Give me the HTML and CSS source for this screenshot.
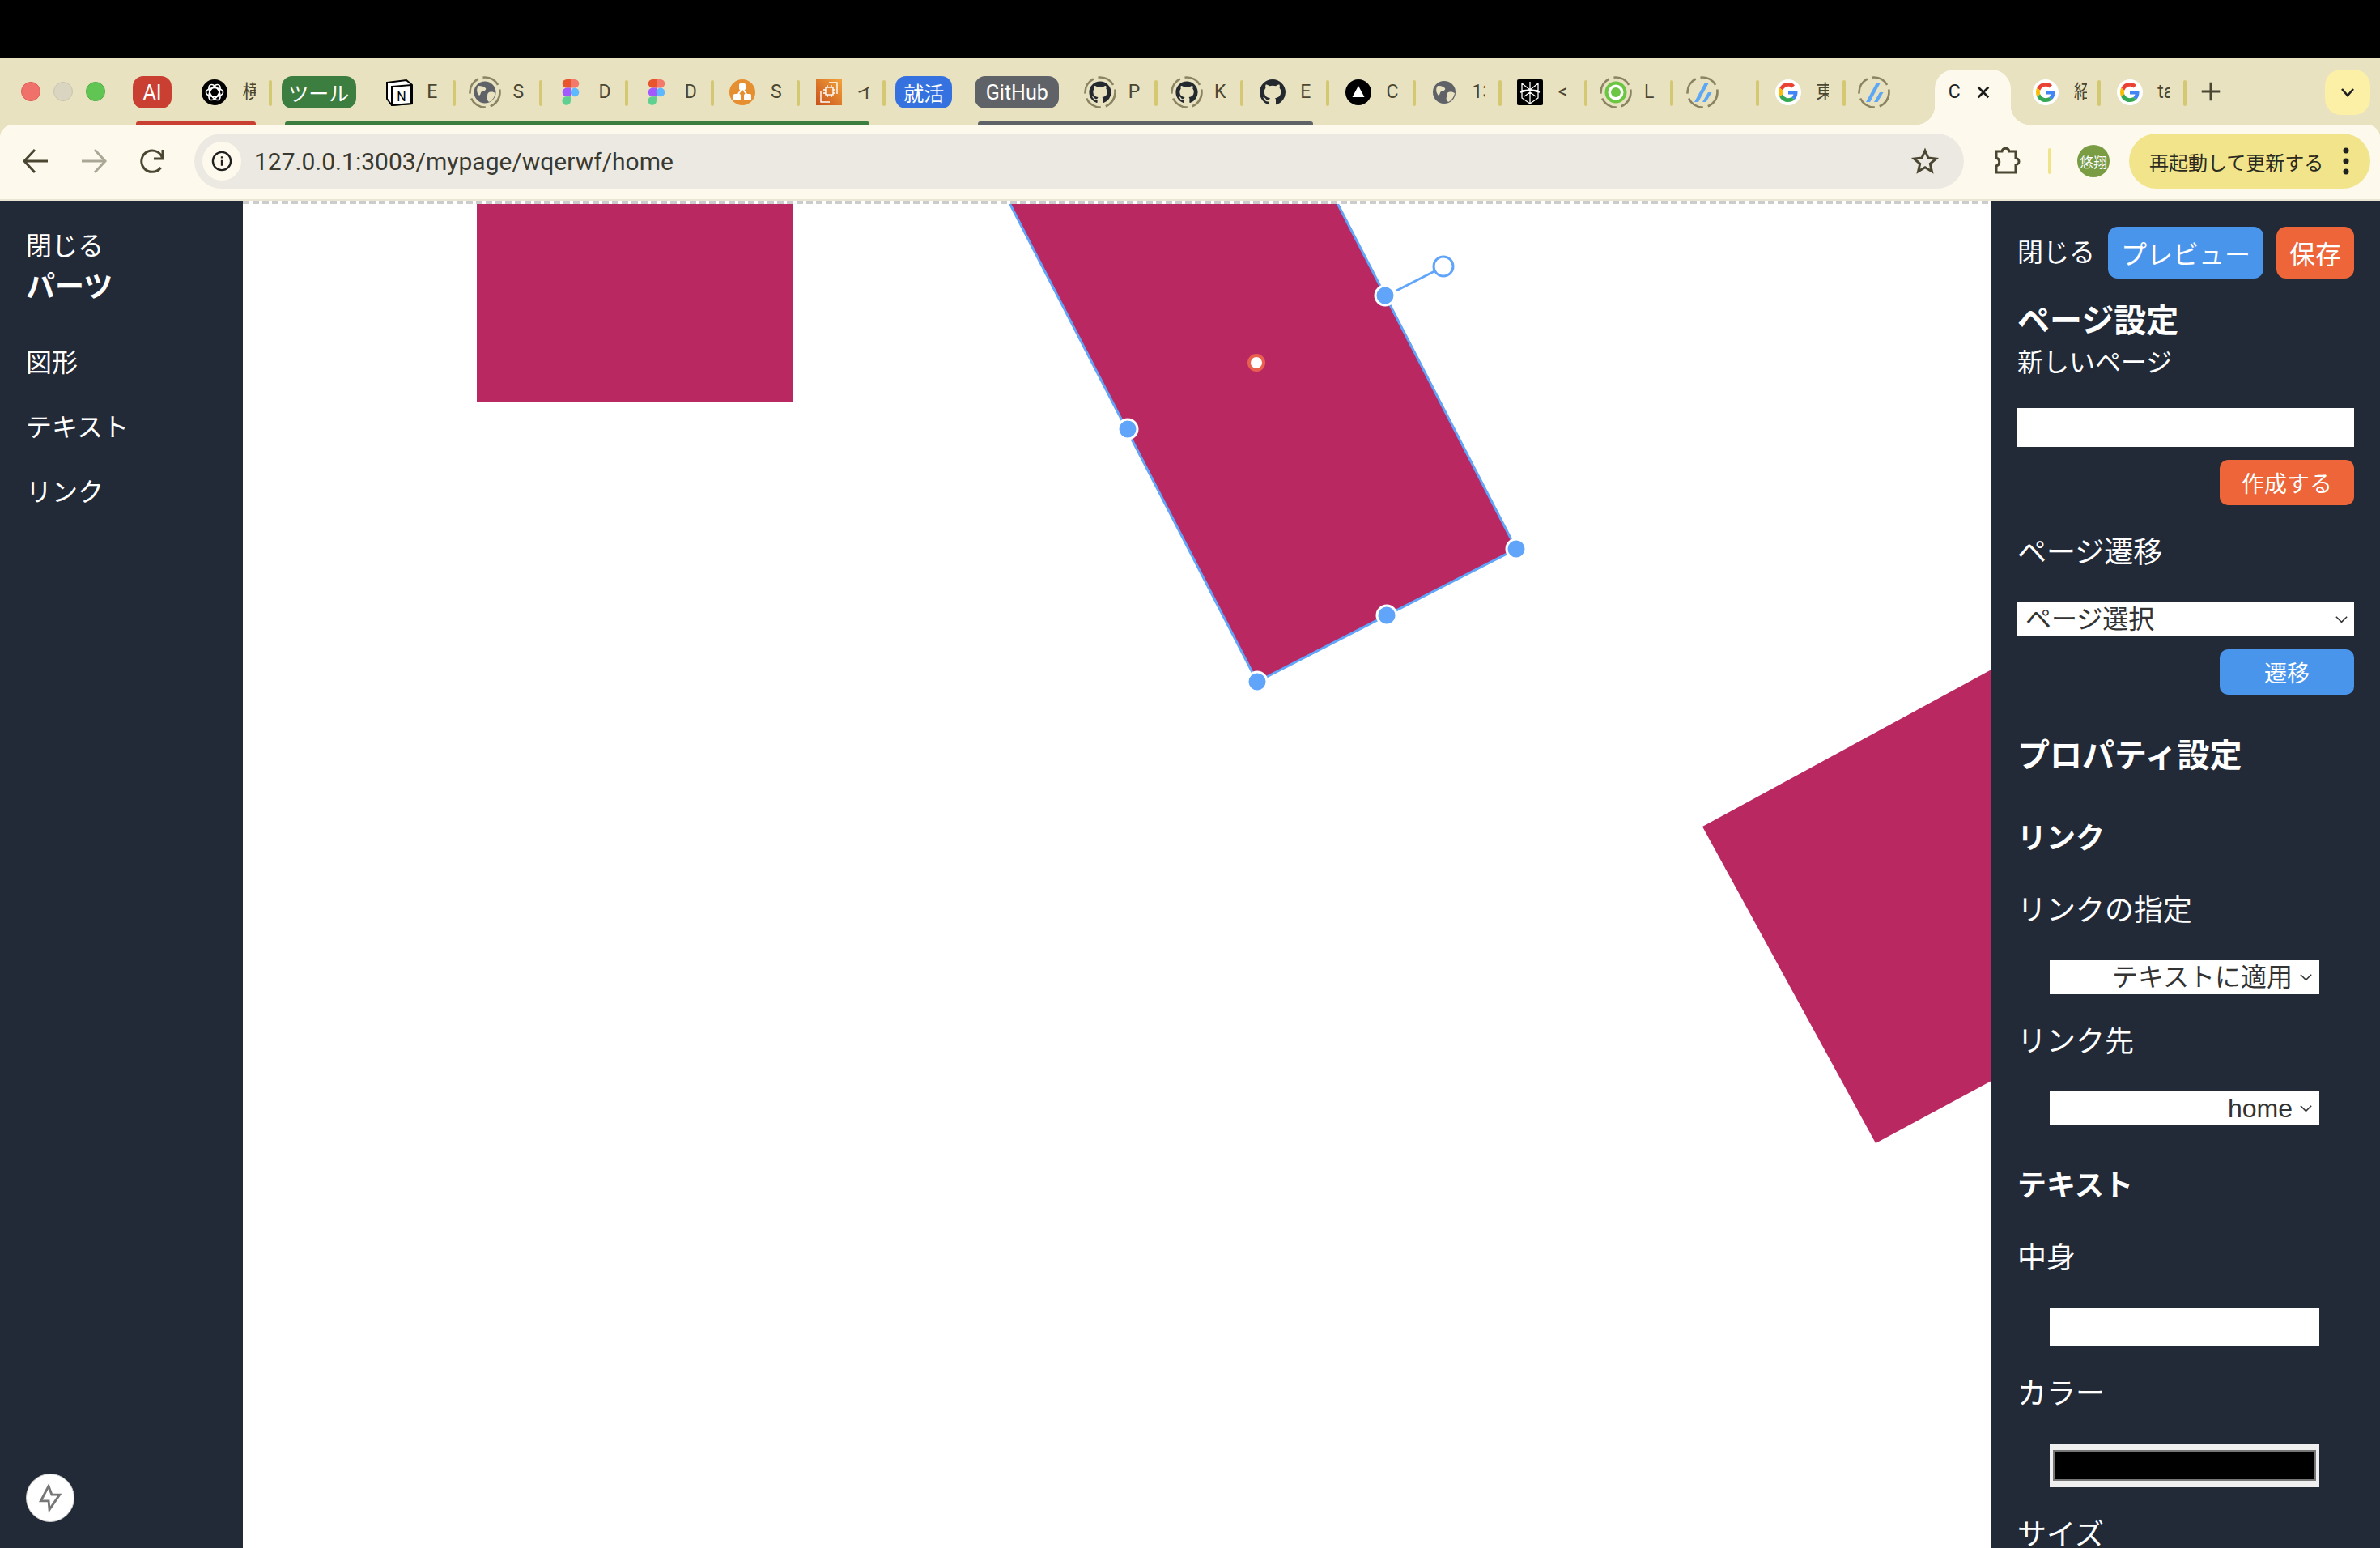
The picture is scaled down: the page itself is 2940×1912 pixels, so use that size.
FILE: index.html
```html
<!DOCTYPE html>
<html lang="ja">
<head>
    <meta charset="UTF-8">
    <title>mypage - wqerwf</title>
    <link rel="stylesheet" href="styles.css">
</head>
<body>
    <!-- shared icons -->
    <svg class="icon-defs" width="0" height="0">
        <defs>
            <linearGradient id="aws-grad" x1="0" y1="1" x2="1" y2="0">
                <stop offset="0" stop-color="#c8511b"/>
                <stop offset="1" stop-color="#f2a33a"/>
            </linearGradient>
        </defs>
        <symbol id="ring" viewBox="0 0 40 40">
            <circle cx="20" cy="20" r="18.5" fill="none" stroke="#8a8463" stroke-width="2.6" stroke-dasharray="22 6"/>
        </symbol>
        <symbol id="i-chatgpt" viewBox="0 0 40 40">
            <circle cx="20" cy="20" r="16" fill="#000"/>
            <g fill="none" stroke="#fff" stroke-width="1.6">
                <ellipse cx="20" cy="20" rx="10.5" ry="5.5"/>
                <ellipse cx="20" cy="20" rx="10.5" ry="5.5" transform="rotate(60 20 20)"/>
                <ellipse cx="20" cy="20" rx="10.5" ry="5.5" transform="rotate(120 20 20)"/>
            </g>
        </symbol>
        <symbol id="i-notion" viewBox="0 0 40 40">
            <path d="M5 8 29 5 36 11V34L11 36 5 28Z" fill="#fff" stroke="#000" stroke-width="2"/>
            <path d="M11 13 35 11V34L11 36Z" fill="#fff" stroke="#000" stroke-width="2"/>
            <text x="23" y="31" text-anchor="middle" class="notion-n">N</text>
        </symbol>
        <symbol id="i-globe" viewBox="0 0 40 40">
            <use href="#ring"/>
            <circle cx="20" cy="20" r="13.5" fill="#5f6368"/>
            <path d="M12 12c4 0 7 1 9 3 1 2-2 4-5 4-2 2-1 4-3 5-3-3-4-8-1-12ZM25 20c4-1 6 0 8 1-1 5-4 9-8 11-2-2-3-4-2-6 0-3 0-5 2-6Z" fill="#e8e2c0"/>
        </symbol>
        <symbol id="i-globe-plain" viewBox="0 0 40 40">
            <circle cx="20" cy="20" r="14" fill="#5f6368"/>
            <path d="M12 12c4 0 7 1 9 3 1 2-2 4-5 4-2 2-1 4-3 5-3-3-4-8-1-12ZM25 20c4-1 6 0 8 1-1 5-4 9-8 11-2-2-3-4-2-6 0-3 0-5 2-6Z" fill="#e8e2c0"/>
        </symbol>
        <symbol id="i-figma" viewBox="0 0 40 40">
            <path d="M20 4h-5a5.300 5.300 0 0 0 0 10.600h5Z" fill="#e8552d"/>
            <path d="M20 4h5a5.300 5.300 0 0 1 0 10.600h-5Z" fill="#f5796a"/>
            <path d="M20 14.600h-5a5.300 5.300 0 0 0 0 10.600h5Z" fill="#a259ff"/>
            <circle cx="25" cy="19.900" r="5.300" fill="#5cb8ff"/>
            <path d="M15 25.200h5v5.300a5.300 5.300 0 1 1-5-5.300Z" fill="#5fd08f"/>
        </symbol>
        <symbol id="i-tree" viewBox="0 0 40 40">
            <circle cx="20" cy="20" r="16" fill="#e68f31"/>
            <path d="M20 15 13 25M20 15 27 25" stroke="#fff" stroke-width="2"/>
            <rect x="16" y="9" width="8" height="8" rx="1.500" fill="#fff"/>
            <rect x="9" y="22" width="9" height="8" rx="1.500" fill="#fff"/>
            <rect x="22" y="22" width="9" height="8" rx="1.500" fill="#fff"/>
        </symbol>
        <symbol id="i-aws" viewBox="0 0 40 40">
            <rect x="4" y="4" width="32" height="32" fill="url(#aws-grad)"/>
            <g fill="none" stroke="#fff" stroke-width="1.400">
                <rect x="16" y="14" width="9" height="9"/>
                <path d="M18 11v3M23 11v3M18 23v3M23 23v3M13 17h3M13 21h3M25 17h3M25 21h3"/>
                <path d="M20 8h10v14M10 18v14h11"/>
            </g>
        </symbol>
        <symbol id="i-github" viewBox="0 0 40 40">
            <path transform="translate(4 4) scale(2)" fill="#24292f" d="M8 0C3.58 0 0 3.58 0 8c0 3.54 2.29 6.53 5.47 7.59.4.07.55-.17.55-.38 0-.19-.01-.82-.01-1.49-2.01.37-2.53-.49-2.69-.94-.09-.23-.48-.94-.82-1.13-.28-.15-.68-.52-.01-.53.63-.01 1.08.58 1.23.82.72 1.21 1.87.87 2.33.66.07-.52.28-.87.51-1.07-1.78-.2-3.64-.89-3.64-3.95 0-.87.31-1.59.82-2.15-.08-.2-.36-1.02.08-2.12 0 0 .67-.21 2.2.82.64-.18 1.32-.27 2-.27.68 0 1.36.09 2 .27 1.53-1.04 2.2-.82 2.2-.82.44 1.1.16 1.92.08 2.12.51.56.82 1.27.82 2.15 0 3.07-1.87 3.75-3.65 3.95.29.25.54.73.54 1.48 0 1.07-.01 1.93-.01 2.2 0 .21.15.46.55.38A8.013 8.013 0 0016 8c0-4.42-3.58-8-8-8z"/>
        </symbol>
        <symbol id="i-github-ring" viewBox="0 0 40 40">
            <use href="#ring"/>
            <path transform="translate(6.400 6.400) scale(1.700)" fill="#24292f" d="M8 0C3.58 0 0 3.58 0 8c0 3.54 2.29 6.53 5.47 7.59.4.07.55-.17.55-.38 0-.19-.01-.82-.01-1.49-2.01.37-2.53-.49-2.69-.94-.09-.23-.48-.94-.82-1.13-.28-.15-.68-.52-.01-.53.63-.01 1.08.58 1.23.82.72 1.21 1.87.87 2.33.66.07-.52.28-.87.51-1.07-1.78-.2-3.64-.89-3.64-3.95 0-.87.31-1.59.82-2.15-.08-.2-.36-1.02.08-2.12 0 0 .67-.21 2.2.82.64-.18 1.32-.27 2-.27.68 0 1.36.09 2 .27 1.53-1.04 2.2-.82 2.2-.82.44 1.1.16 1.92.08 2.12.51.56.82 1.27.82 2.15 0 3.07-1.87 3.75-3.65 3.95.29.25.54.73.54 1.48 0 1.07-.01 1.93-.01 2.2 0 .21.15.46.55.38A8.013 8.013 0 0016 8c0-4.42-3.58-8-8-8z"/>
        </symbol>
        <symbol id="i-triangle" viewBox="0 0 40 40">
            <circle cx="20" cy="20" r="16" fill="#000"/>
            <path d="M20 12 27.500 26H12.500Z" fill="#fff"/>
        </symbol>
        <symbol id="i-spark" viewBox="0 0 40 40">
            <rect x="4" y="4" width="32" height="32" rx="2" fill="#000"/>
            <path d="M20 7V34M10 9 20 17 30 9M10 9V18L20 17 30 18V9M8 20 20 17 32 20M10 18V27L20 34 30 27V18M13 25 20 20 27 25" fill="none" stroke="#fff" stroke-width="1.300"/>
        </symbol>
        <symbol id="i-green" viewBox="0 0 40 40">
            <use href="#ring"/>
            <circle cx="20" cy="20" r="11.500" fill="#fff" stroke="#6cc644" stroke-width="4"/>
            <circle cx="20" cy="20" r="6" fill="#6cc644"/>
        </symbol>
        <symbol id="i-slash" viewBox="0 0 40 40">
            <use href="#ring"/>
            <path d="M23 8H28L15 32H10ZM27 20H31.500L24.500 32H20Z" fill="#5ca8f5"/>
        </symbol>
        <symbol id="i-google" viewBox="0 0 40 40">
            <circle cx="20" cy="20" r="16" fill="#fff"/>
            <g transform="translate(8 8) scale(.5)">
                <path fill="#EA4335" d="M24 9.500c3.540 0 6.710 1.220 9.210 3.600l6.850-6.850C35.900 2.380 30.470 0 24 0 14.620 0 6.510 5.380 2.560 13.220l7.980 6.190C12.430 13.720 17.740 9.500 24 9.500z"/>
                <path fill="#4285F4" d="M46.980 24.550c0-1.570-.15-3.090-.38-4.550H24v9.020h12.940c-.58 2.960-2.260 5.480-4.780 7.180l7.730 6c4.510-4.180 7.090-10.360 7.090-17.650z"/>
                <path fill="#FBBC05" d="M10.530 28.590c-.48-1.450-.76-2.990-.76-4.590s.27-3.140.76-4.590l-7.980-6.190C.92 16.460 0 20.120 0 24c0 3.880.92 7.540 2.560 10.780l7.970-6.190z"/>
                <path fill="#34A853" d="M24 48c6.480 0 11.930-2.130 15.890-5.810l-7.730-6c-2.150 1.450-4.920 2.300-8.160 2.300-6.260 0-11.570-4.220-13.470-9.910l-7.980 6.190C6.510 42.620 14.620 48 24 48z"/>
            </g>
        </symbol>
    </svg>

    <header class="browser">
        <div class="tabstrip">
            <div class="lights">
                <span class="light light-red"></span>
                <span class="light light-off"></span>
                <span class="light light-green"></span>
            </div>

            <div class="tab-group group-red group-first">
                <span class="chip chip-red">AI</span>
                <div class="tab tab-after-chip"><svg class="ico"><use href="#i-chatgpt"/></svg><span class="tab-label">横</span></div>
            </div>

            <div class="tab-group group-green">
                <span class="chip chip-green">ツール</span>
                <div class="tab tab-after-chip"><svg class="ico"><use href="#i-notion"/></svg><span class="tab-label">E</span></div>
                <div class="tab"><svg class="ico"><use href="#i-globe"/></svg><span class="tab-label">S</span></div>
                <div class="tab"><svg class="ico"><use href="#i-figma"/></svg><span class="tab-label">D</span></div>
                <div class="tab"><svg class="ico"><use href="#i-figma"/></svg><span class="tab-label">D</span></div>
                <div class="tab"><svg class="ico"><use href="#i-tree"/></svg><span class="tab-label">S</span></div>
                <div class="tab"><svg class="ico"><use href="#i-aws"/></svg><span class="tab-label">イ</span></div>
            </div>

            <div class="tab-group tab-group-solo">
                <span class="chip chip-blue">就活</span>
            </div>

            <div class="tab-group group-grey tab-group-github">
                <span class="chip chip-grey">GitHub</span>
                <div class="tab tab-after-github"><svg class="ico"><use href="#i-github-ring"/></svg><span class="tab-label">P</span></div>
                <div class="tab"><svg class="ico"><use href="#i-github-ring"/></svg><span class="tab-label">K</span></div>
                <div class="tab"><svg class="ico"><use href="#i-github"/></svg><span class="tab-label">E</span></div>
            </div>

            <div class="tab"><svg class="ico"><use href="#i-triangle"/></svg><span class="tab-label">C</span></div>
            <div class="tab"><svg class="ico"><use href="#i-globe-plain"/></svg><span class="tab-label">13</span></div>
            <div class="tab"><svg class="ico"><use href="#i-spark"/></svg><span class="tab-label">&lt;</span></div>
            <div class="tab"><svg class="ico"><use href="#i-green"/></svg><span class="tab-label">L</span></div>
            <div class="tab"><svg class="ico"><use href="#i-slash"/></svg><span class="tab-label"></span></div>
            <div class="tab"><svg class="ico"><use href="#i-google"/></svg><span class="tab-label">東</span></div>
            <div class="tab tab-plain"><svg class="ico"><use href="#i-slash"/></svg><span class="tab-label"></span></div>

            <div class="tab-active">
                <span class="tab-label tab-label-active">C</span>
                <svg class="tab-close" viewBox="0 0 20 20"><path d="M3 3 17 17M17 3 3 17"/></svg>
            </div>

            <div class="tab tab-after-active"><svg class="ico"><use href="#i-google"/></svg><span class="tab-label">紹</span></div>
            <div class="tab"><svg class="ico"><use href="#i-google"/></svg><span class="tab-label">ta</span></div>

            <svg class="new-tab" viewBox="0 0 24 24"><path d="M12 3V21M3 12H21"/></svg>
            <div class="tab-search">
                <svg viewBox="0 0 20 20"><path d="M3 6 10 14 17 6"/></svg>
            </div>
        </div>

        <div class="toolbar">
            <svg class="tool-icon" viewBox="0 0 24 24"><path d="M19.500 12H5M11.500 5 5 12l6.500 7"/></svg>
            <svg class="tool-icon tool-icon-off" viewBox="0 0 24 24"><path d="M4.500 12H19M12.500 5 19 12l-6.500 7"/></svg>
            <svg class="tool-icon" viewBox="0 0 24 24"><path d="M18.500 11a6.600 6.600 0 1 0-1.200 5M18.500 5V10.500H13"/></svg>

            <div class="omnibox">
                <span class="site-info">
                    <svg viewBox="0 0 24 24"><circle cx="12" cy="12" r="9.500"/><path d="M12 11V17M12 7V9"/></svg>
                </span>
                <span class="url">127.0.0.1:3003/mypage/wqerwf/home</span>
                <svg class="star" viewBox="0 0 24 24"><path d="M12 3.500 14.600 9.300 21 10 16.200 14.200 17.600 20.500 12 17.200 6.400 20.500 7.800 14.200 3 10 9.400 9.300Z"/></svg>
            </div>

            <svg class="tool-icon puzzle" viewBox="0 0 24 24"><path d="M6 6h3.500a2.300 2.300 0 0 1 4.500 0H18v4.200a2 2 0 0 1 0 4V19H6v-4a2.600 2.600 0 0 0 0-5z"/></svg>
            <span class="tool-sep"></span>
            <span class="avatar">悠翔</span>
            <div class="update-pill">
                <span>再起動して更新する</span>
                <svg class="dots" viewBox="0 0 8 36"><circle cx="4" cy="5" r="3.500"/><circle cx="4" cy="18" r="3.500"/><circle cx="4" cy="31" r="3.500"/></svg>
            </div>
        </div>
    </header>

    <main class="editor">
        <aside class="parts">
            <div class="close-link">閉じる</div>
            <div class="parts-title">パーツ</div>
            <ul class="parts-list">
                <li>図形</li>
                <li>テキスト</li>
                <li>リンク</li>
            </ul>
            <button class="dev-badge" type="button" aria-label="dev tools">
                <svg viewBox="0 0 60 60"><path d="M28 15 18 34H28L29 45 42 26H32Z"/></svg>
            </button>
        </aside>

        <section class="canvas">
            <div class="canvas-edge"></div>
            <svg class="stage" viewBox="300 252 2160 1660">
                <rect class="shape" x="589" y="200" width="390" height="297"/>
                <polygon class="shape" points="2103,1021 2460,827 2460,1335 2317,1412"/>

                <polygon class="shape shape-selected" points="1229,216 1549,52 1873,678 1553,842"/>
                <line class="rotate-line" x1="1725" y1="359" x2="1772" y2="335"/>
                <circle class="rotate-handle" cx="1783" cy="329" r="12"/>
                <circle class="handle" cx="1711" cy="365" r="12"/>
                <circle class="handle" cx="1393" cy="530" r="12"/>
                <circle class="handle" cx="1873" cy="678" r="12"/>
                <circle class="handle" cx="1713" cy="760" r="12"/>
                <circle class="handle" cx="1553" cy="842" r="12"/>
                <circle class="pivot" cx="1552" cy="448" r="9"/>
            </svg>
        </section>

        <aside class="settings">
            <div class="settings-top">
                <span class="close-link">閉じる</span>
                <button class="btn btn-blue" type="button">プレビュー</button>
                <button class="btn btn-orange" type="button">保存</button>
            </div>

            <h2 class="page-title">ページ設定</h2>
            <div class="new-page">新しいページ</div>
            <input class="page-input" type="text">
            <div class="btn-row">
                <button class="btn-small btn-orange" type="button">作成する</button>
            </div>

            <div class="label label-first">ページ遷移</div>
            <select class="page-select">
                <option>ページ選択</option>
            </select>
            <div class="btn-row">
                <button class="btn-small btn-blue" type="button">遷移</button>
            </div>

            <h2 class="prop-title">プロパティ設定</h2>

            <h3 class="group-title">リンク</h3>
            <div class="label">リンクの指定</div>
            <select class="prop-select">
                <option>テキストに適用</option>
            </select>
            <div class="label">リンク先</div>
            <select class="prop-select">
                <option>home</option>
            </select>

            <h3 class="group-title group-title-text">テキスト</h3>
            <div class="label">中身</div>
            <input class="prop-input" type="text">
            <div class="label">カラー</div>
            <input class="prop-color" type="color" value="#000000">
            <div class="label">サイズ</div>
        </aside>
    </main>
</body>
</html>
```

FILE: styles.css
```css
* {
    box-sizing: border-box;
}

html, body {
    height: 100%;
}

body {
    margin: 0;
    width: 2940px;
    height: 1912px;
    overflow: hidden;
    background: #000;
    padding-top: 72px;
    font-family: "Liberation Sans", "Noto Sans CJK JP", sans-serif;
    color: #fff;
}

.icon-defs {
    position: absolute;
}

/* browser chrome */
.browser {
    background: #e8e2c0;
    height: 176px;
}

.tabstrip {
    display: flex;
    align-items: flex-start;
    height: 82px;
    padding-top: 22px;
    color: #4a4632;
    font-family: Roboto, "Noto Sans CJK JP", sans-serif;
}

.lights {
    display: flex;
    align-items: center;
    gap: 16px;
    height: 38px;
    margin-left: 26px;
    margin-right: 34px;
}

.light {
    width: 24px;
    height: 24px;
    border-radius: 50%;
}

.light-red {
    background: #f0706a;
    border: 1px solid #dd5f57;
}

.light-off {
    background: #d9d5c0;
    border: 1px solid #c9c5ae;
}

.light-green {
    background: #61c554;
    border: 1px solid #52ad46;
}

.tab-group {
    position: relative;
    display: flex;
    height: 60px;
    margin-left: 12px;
}

.group-first {
    margin-left: 0;
}

.tab-group-solo {
    height: 40px;
}

.tab-group-github {
    margin-left: 28px;
}

.tab-group::after {
    content: "";
    position: absolute;
    left: 4px;
    right: 20px;
    bottom: 0;
    height: 4px;
    border-radius: 3px 3px 0 0;
}

.tab-group-solo::after {
    display: none;
}

.group-red::after {
    background: #c94032;
}

.group-green::after {
    background: #3c7d40;
}

.group-grey::after {
    background: #5f6368;
}

.chip {
    display: flex;
    align-items: center;
    justify-content: center;
    height: 40px;
    border-radius: 13px;
    color: #fff;
    font-size: 25px;
}

.chip-red {
    width: 48px;
    background: #c94032;
}

.chip-green {
    width: 92px;
    background: #3c7d40;
}

.chip-blue {
    width: 70px;
    background: #3572e0;
}

.chip-grey {
    width: 104px;
    background: #5f6368;
}

.tab {
    position: relative;
    display: flex;
    align-items: flex-start;
    flex: none;
    gap: 14.5px;
    width: 106.2px;
    height: 40px;
    padding-left: 15.5px;
}

.tab::after {
    content: "";
    position: absolute;
    right: 0;
    top: 5px;
    width: 4px;
    height: 32px;
    border-radius: 2px;
    background: #d4c872;
}

.tab-plain::after {
    display: none;
}

.tab-after-chip {
    margin-left: 17.5px;
}

.tab-after-github {
    margin-left: 15.5px;
}

.tab-after-active {
    margin-left: 8px;
    width: 103.5px;
}

.ico {
    flex: none;
    width: 40px;
    height: 40px;
}

.tab-label {
    width: 16px;
    overflow: hidden;
    white-space: nowrap;
    font-size: 23px;
    line-height: 40px;
}

.tab-active {
    position: relative;
    display: flex;
    align-items: center;
    flex: none;
    width: 94px;
    height: 68px;
    margin-top: -8px;
    margin-left: 4px;
    padding-left: 17px;
    padding-bottom: 12px;
    background: #fdf9ed;
    border-radius: 24px 24px 0 0;
}

.tab-active::before,
.tab-active::after {
    content: "";
    position: absolute;
    bottom: 0;
    width: 24px;
    height: 24px;
}

.tab-active::before {
    left: -24px;
    background: radial-gradient(circle at 0 0, transparent 24px, #fdf9ed 24.5px);
}

.tab-active::after {
    right: -24px;
    background: radial-gradient(circle at 100% 0, transparent 24px, #fdf9ed 24.5px);
}

.tab-label-active {
    color: #1f1f1f;
}

.tab-close {
    width: 18px;
    height: 18px;
    margin-left: 18px;
    fill: none;
    stroke: #1a1a1a;
    stroke-width: 3;
}

.new-tab {
    flex: none;
    width: 30px;
    height: 30px;
    margin-left: 15px;
    margin-top: 4px;
    fill: none;
    stroke: #4a4632;
    stroke-width: 2.4;
}

.tab-search {
    display: flex;
    align-items: center;
    justify-content: center;
    flex: none;
    width: 56px;
    height: 56px;
    margin-top: -8px;
    margin-left: auto;
    margin-right: 12px;
    background: #fbf0a5;
    border-radius: 20px;
}

.tab-search svg {
    width: 20px;
    height: 20px;
    fill: none;
    stroke: #1f1f1f;
    stroke-width: 2.6;
}

.toolbar {
    display: flex;
    align-items: center;
    height: 94px;
    padding: 0 12px 2px 20px;
    background: #fdf9ed;
    border-bottom: 2px solid #ebe5d4;
    border-radius: 16px 16px 0 0;
    color: #3b3a30;
}

.tool-icon {
    flex: none;
    width: 48px;
    height: 48px;
    margin-right: 24px;
    fill: none;
    stroke: #4a4632;
    stroke-width: 1.5;
}

.tool-icon-off {
    stroke: #aaa796;
}

.omnibox {
    display: flex;
    align-items: center;
    flex: 1;
    height: 68px;
    margin-left: 4px;
    padding: 0 30px 0 10px;
    background: #ece9e2;
    border-radius: 34px;
}

.site-info {
    display: flex;
    align-items: center;
    justify-content: center;
    width: 48px;
    height: 48px;
    border-radius: 50%;
    background: #fdf9ed;
}

.site-info svg {
    width: 28px;
    height: 28px;
    fill: none;
    stroke: #1f1f1f;
    stroke-width: 2;
}

.url {
    margin-left: 16px;
    font-family: Roboto, sans-serif;
    font-size: 30px;
}

.star {
    width: 36px;
    height: 36px;
    margin-left: auto;
    fill: none;
    stroke: #4a4632;
    stroke-width: 2;
}

.puzzle {
    margin-left: 28px;
    margin-right: 0;
}

.tool-sep {
    flex: none;
    width: 4px;
    height: 32px;
    margin-left: 28px;
    border-radius: 2px;
    background: #f0e48a;
}

.avatar {
    display: flex;
    align-items: center;
    justify-content: center;
    flex: none;
    width: 40px;
    height: 40px;
    margin-left: 32px;
    border-radius: 50%;
    background: #7a9c42;
    color: #fff;
    font-family: "Noto Sans CJK JP", sans-serif;
    font-size: 17px;
    white-space: nowrap;
}

.update-pill {
    display: flex;
    align-items: center;
    flex: none;
    width: 298px;
    height: 68px;
    margin-left: 24px;
    padding-left: 25px;
    border-radius: 34px;
    background: #f1e48a;
    color: #2b2a20;
    font-family: "Noto Sans CJK JP", sans-serif;
    font-size: 24px;
}

.dots {
    width: 8px;
    height: 36px;
    margin-left: 24px;
    fill: #1f1f1f;
}

/* editor */
.editor {
    display: flex;
    height: 1664px;
    background: #fff;
    overflow: hidden;
}

.parts {
    position: relative;
    flex: none;
    width: 300px;
    padding: 32px 32px 0;
    background: #222937;
}

.close-link {
    font-size: 32px;
    line-height: 48px;
}

.parts-title {
    font-size: 36px;
    line-height: 54px;
    font-weight: bold;
}

.parts-list {
    list-style: none;
    margin: 26px 0 0;
    padding: 0;
    font-size: 32px;
}

.parts-list li {
    padding: 16px 0;
    line-height: 48px;
}

.dev-badge {
    position: absolute;
    left: 32px;
    bottom: 32px;
    width: 60px;
    height: 60px;
    padding: 0;
    background: #fff;
    border: 1px solid #c9c9c9;
    border-radius: 50%;
}

.dev-badge svg {
    display: block;
    width: 58px;
    height: 58px;
    fill: none;
    stroke: #777;
    stroke-width: 3;
}

.canvas {
    flex: none;
    width: 2160px;
}

.canvas-edge {
    height: 4px;
    background: repeating-linear-gradient(90deg, #ccc 0, #ccc 8px, #fff 8px, #fff 12px);
}

.stage {
    display: block;
    width: 2160px;
    height: 1660px;
}

.shape {
    fill: #ba2862;
}

.shape-selected {
    stroke: #60a5fa;
    stroke-width: 3;
}

.rotate-line {
    stroke: #60a5fa;
    stroke-width: 3;
}

.rotate-handle {
    fill: #fff;
    stroke: #60a5fa;
    stroke-width: 3;
}

.handle {
    fill: #60a5fa;
    stroke: #fff;
    stroke-width: 3;
}

.pivot {
    fill: #fff;
    stroke: #e9604f;
    stroke-width: 4;
}

.settings {
    flex: none;
    width: 480px;
    padding: 32px 32px 0;
    background: #222937;
    overflow: hidden;
}

.settings-top {
    display: flex;
    align-items: center;
    gap: 16px;
}

.btn, .btn-small {
    border: none;
    color: #fff;
    font-family: inherit;
}

.btn {
    height: 64px;
    padding: 8px 16px;
    border-radius: 12px;
    font-size: 32px;
}

.btn-small {
    width: 166px;
    height: 56px;
    margin-top: 16px;
    border-radius: 10px;
    font-size: 28px;
}

.btn-blue {
    background: #4a95ec;
}

.btn-orange {
    background: #ed6539;
}

.page-title, .prop-title {
    margin: 24px 0 0;
    font-size: 40px;
    line-height: 56px;
}

.new-page {
    font-size: 32px;
    line-height: 48px;
}

.page-input {
    display: block;
    width: 416px;
    height: 48px;
    margin-top: 32px;
    border: none;
    background: #fff;
}

.btn-row {
    display: flex;
    justify-content: flex-end;
}

.label {
    margin-top: 32px;
    font-size: 36px;
    line-height: 54px;
}

.page-select, .prop-select {
    display: block;
    margin-top: 34px;
    border: none;
    border-radius: 0;
    appearance: none;
    color: #333;
    font-family: inherit;
    font-size: 32px;
    background-color: #fff;
    background-image: url("data:image/svg+xml,%3Csvg xmlns='http://www.w3.org/2000/svg' viewBox='0 0 20 12'%3E%3Cpath d='M2 2 10 10 18 2' fill='none' stroke='%23333' stroke-width='1.800'/%3E%3C/svg%3E");
    background-repeat: no-repeat;
    background-size: 17px 10px;
}

.page-select {
    width: 416px;
    height: 42px;
    padding: 0 0 0 10px;
    background-position: right 7px center;
}

.prop-select {
    width: 333px;
    height: 42px;
    margin-left: 40px;
    padding: 0 33px 0 0;
    text-align: right;
    background-position: right 8px center;
}

.prop-title {
    margin-top: 45px;
    line-height: 60px;
}

.group-title {
    margin: 46px 0 0;
    font-size: 36px;
    line-height: 54px;
}

.group-title-text {
    margin-top: 48px;
}

.group-title + .label {
    margin-top: 35px;
}

.label-first {
    margin-top: 32px;
}

.prop-input {
    display: block;
    width: 333px;
    height: 48px;
    margin: 34px 0 0 40px;
    border: none;
    background: #fff;
}

.prop-color {
    display: block;
    width: 333px;
    height: 54px;
    margin: 34px 0 0 40px;
    padding: 8px 4px;
    border: none;
    background: #efefef;
}

.prop-color::-webkit-color-swatch-wrapper {
    padding: 0;
}

.prop-color::-webkit-color-swatch {
    border: 2px solid #767676;
}
```
